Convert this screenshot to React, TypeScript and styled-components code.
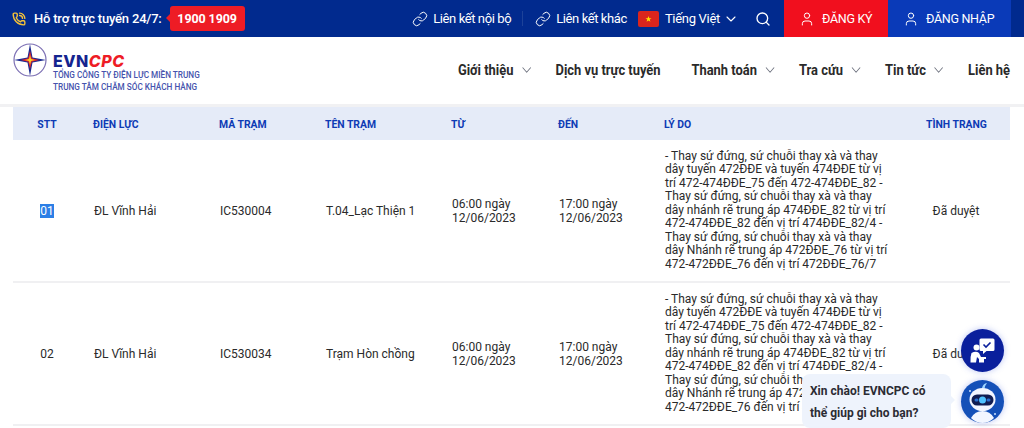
import * as React from 'react';
import styled, { createGlobalStyle } from 'styled-components';
import { ChevronDown, Link, PhoneCall, Search, User } from 'lucide-react';

const GlobalStyle = createGlobalStyle`
	html, body {
		margin: 0;
		height: 100%;
		overflow: hidden;
		background: #fff;
		font-family: Roboto, "Liberation Sans", sans-serif;
	}
`;

const Page = styled.div`
	position: relative;
	width: 1024px;
	height: 428px;
	overflow: hidden;
	color: #222;
`;

const TopBar = styled.div`
	display: flex;
	align-items: center;
	height: 37px;
	background: #012a8e;
	color: #fff;
	padding-left: 12px;
	box-sizing: border-box;
	white-space: nowrap;
`;

const Hotline = styled.div`
	display: flex;
	align-items: center;
	font-size: 13px;
	font-weight: 500;
	letter-spacing: -0.2px;
	gap: 8px;
	flex: 1;
`;

const HotNumber = styled.span`
	position: relative;
	background: #ee1c25;
	border-radius: 3px;
	font-weight: 700;
	font-size: 12.5px;
	letter-spacing: -0.1px;
	text-align: center;
	width: 75px;
	height: 25px;
	line-height: 25px;
	&::before {
		content: '';
		position: absolute;
		left: -4px;
		top: 8px;
		border-style: solid;
		border-width: 4.5px 4px 4.5px 0;
		border-color: transparent #ee1c25 transparent transparent;
	}
`;

const TopLink = styled.a`
	display: flex;
	align-items: center;
	gap: 5px;
	font-size: 13px;
	letter-spacing: -0.4px;
`;

const Divider = styled.span`
	width: 1px;
	height: 15px;
	margin: 0 12px 0 11px;
	background: #1d4299;
`;

const Lang = styled.div`
	display: flex;
	align-items: center;
	gap: 6px;
	margin-left: 11px;
	font-size: 13px;
	letter-spacing: -0.3px;
	svg:last-child {
		margin: 0 2px 0 -3px;
	}
`;

const SearchBox = styled.div`
	display: flex;
	margin: 0 13px 0 14px;
`;

const AuthButton = styled.a<{ $bg: string; $w: number }>`
	display: flex;
	flex: none;
	align-items: center;
	gap: 7px;
	padding-left: 15px;
	box-sizing: border-box;
	height: 37px;
	width: ${({ $w }) => $w}px;
	background: ${({ $bg }) => $bg};
	font-size: 12.5px;
	letter-spacing: -0.3px;
`;

const TopEnd = styled.div`
	flex: none;
	width: 13px;
`;

const NavBar = styled.div`
	display: flex;
	align-items: center;
	height: 67px;
	padding: 0 14px 0 13px;
	background: #fff;
	border-bottom: 3px solid #f1f1f3;
`;

const Brand = styled.div`
	display: flex;
	align-items: flex-start;
	align-self: flex-start;
	gap: 6px;
	margin-top: 6px;
	flex: 1;
`;

const BrandText = styled.div`
	display: flex;
	flex-direction: column;
	padding-top: 9px;
`;

const BrandName = styled.div`
	font-family: Inter, "Liberation Sans", sans-serif;
	font-size: 16px;
	font-weight: 800;
	line-height: 18px;
	letter-spacing: 0.5px;
	color: #14248f;
	em {
		color: #ee1c25;
	}
`;

const BrandLine = styled.div`
	font-size: 8.2px;
	font-weight: 500;
	line-height: 11.5px;
	color: #4553ad;
	white-space: nowrap;
	&:first-of-type {
		margin-top: 10px;
	}
`;

// the site uses a condensed face: squeeze Roboto from the right edge
const NavMenu = styled.nav`
	display: flex;
	align-items: center;
	transform: scaleX(0.86);
	transform-origin: right center;
	margin-top: -1px;
`;

const NavItem = styled.a<{ $gap?: number }>`
	display: flex;
	align-items: center;
	gap: 6px;
	margin-right: ${({ $gap }) => $gap ?? 0}px;
	font-weight: 700;
	font-size: 15px;
	color: #2a2a2a;
	white-space: nowrap;
	svg {
		color: #6b6f7c;
	}
`;

const Table = styled.div`
	margin: 0 14px 0 13px;
`;

const GRID = '80px 126px 106px 126px 107px 106px 262px 60px 1fr';

const HeadRow = styled.div`
	display: grid;
	grid-template-columns: ${GRID};
	align-items: center;
	height: 33px;
	padding-top: 1px;
	box-sizing: border-box;
	background: #e5ebf8;
	color: #0e3bb5;
	font-size: 10.4px;
	font-weight: 700;
	white-space: nowrap;
`;

const HeadCell = styled.div<{ $pr?: number }>`
	text-align: ${({ $pr }) => ($pr === undefined ? 'left' : 'center')};
	padding-right: ${({ $pr }) => $pr ?? 0}px;
`;

const Row = styled.div`
	display: grid;
	grid-template-columns: ${GRID};
	align-items: center;
	height: 143px;
	border-bottom: 2px solid #f0f0f2;
	box-sizing: border-box;
	font-size: 12px;
	color: #2a2a2a;
`;

const Cell = styled.div<{ $pr?: number }>`
	padding-left: ${({ $pr }) => ($pr === undefined ? '1px' : '0')};
	text-align: ${({ $pr }) => ($pr === undefined ? 'left' : 'center')};
	padding-right: ${({ $pr }) => $pr ?? 0}px;
	line-height: 14px;
	white-space: nowrap;
`;

const Reason = styled(Cell)`
	line-height: 13.5px;
`;

const Selected = styled.span`
	background: #2c7fe6;
	color: #fff;
`;

const BotButton = styled.div<{ $top: number; $bg: string }>`
	position: absolute;
	left: 961px;
	top: ${({ $top }) => $top}px;
	width: 43px;
	height: 43px;
	border-radius: 50%;
	background: ${({ $bg }) => $bg};
	box-shadow: 0 0 6px rgba(60, 90, 220, 0.35);
`;

const Bubble = styled.div`
	position: absolute;
	left: 802px;
	top: 374px;
	width: 149px;
	height: 54px;
	box-sizing: border-box;
	padding: 7px 8px;
	background: #eef3fc;
	border-radius: 8px;
	font-size: 12px;
	font-weight: 700;
	line-height: 21.5px;
	color: #2b2b33;
	&::after {
		content: '';
		position: absolute;
		right: -4px;
		top: 22px;
		border-style: solid;
		border-width: 4px 0 4px 4px;
		border-color: transparent transparent transparent #eef3fc;
	}
`;

const rows = [
	{ stt: '01', name: 'T.04_Lạc Thiện 1', code: 'IC530004' },
	{ stt: '02', name: 'Trạm Hòn chồng', code: 'IC530034' },
];

const reason = [
	'- Thay sứ đứng, sứ chuỗi thay xà và thay',
	'dây tuyến 472ĐĐE và tuyến 474ĐĐE từ vị',
	'trí 472-474ĐĐE_75 đến 472-474ĐĐE_82 -',
	'Thay sứ đứng, sứ chuỗi thay xà và thay',
	'dây nhánh rẽ trung áp 474ĐĐE_82 từ vị trí',
	'472-474ĐĐE_82 đến vị trí 474ĐĐE_82/4 -',
	'Thay sứ đứng, sứ chuỗi thay xà và thay',
	'dây Nhánh rẽ trung áp 472ĐĐE_76 từ vị trí',
	'472-472ĐĐE_76 đến vị trí 472ĐĐE_76/7',
];

const Logo = () => (
	<svg width="34" height="34" viewBox="0 0 34 34">
		<circle cx="17" cy="17" r="16" fill="#fff" stroke="#7d70b4" strokeWidth="1.2" />
		<path d="M17 1 L19.500 14.500 L33 17 L19.500 19.500 L17 33 L14.500 19.500 L1 17 L14.500 14.500 Z" fill="#1b2a8f" />
		<path d="M17 8 L18.800 15.200 L26 17 L18.800 18.800 L17 26 L15.200 18.800 L8 17 L15.200 15.200 Z" fill="#e3242b" />
		<path d="M17 12 L18 16 L22 17 L18 18 L17 22 L16 18 L12 17 L16 16 Z" fill="#f8d42a" />
	</svg>
);

const Flag = () => (
	<svg width="21" height="16" viewBox="0 0 21 16">
		<rect width="21" height="16" rx="2" fill="#da251d" />
		<path d="M10.500 5 L11.300 7.200 L13.500 7.200 L11.700 8.600 L12.400 10.800 L10.500 9.400 L8.600 10.800 L9.300 8.600 L7.500 7.200 L9.700 7.200 Z" fill="#ffdf00" />
	</svg>
);

const AgentIcon = () => (
	<svg width="43" height="43" viewBox="0 0 43 43">
		<circle cx="15.500" cy="18.500" r="3" fill="#fff" />
		<path d="M10.500 24 Q15 21.500 18 24 L20 28 L25 28 L25 30 L23 30 L23 33.500 L18 33.500 L18 30 L16 28 L15 33.500 L9.500 33.500 Q9 28 10.500 24 Z" fill="#fff" />
		<path d="M20 9.500 H32 A1.500 1.500 0 0 1 33.500 11 V20.500 A1.500 1.500 0 0 1 32 22 H25.500 L22 25 V22 H20 A1.500 1.500 0 0 1 18.500 20.500 V11 A1.500 1.500 0 0 1 20 9.500 Z" fill="#fff" />
		<path d="M22.500 15.500 L25 18 L29.500 13.500" fill="none" stroke="#0a1f9c" strokeWidth="1.600" />
	</svg>
);

const RobotIcon = () => (
	<svg width="43" height="43" viewBox="0 0 43 43">
		<path d="M21 8 Q22 3.500 26 3 Q23.500 6 23.500 9 Z" fill="#9fd6ff" />
		<circle cx="9" cy="11" r="1" fill="#cfe4ff" />
		<circle cx="34" cy="34" r="1" fill="#cfe4ff" />
		<path d="M10 38 Q14 31 21.500 31 Q29 31 33 38 Q28 43 21.500 43 Q15 43 10 38 Z" fill="#f2f6ff" />
		<ellipse cx="21.500" cy="19.500" rx="13" ry="11.500" fill="#f2f6ff" />
		<rect x="10.500" y="14.500" width="22" height="11" rx="5.500" fill="#101d52" />
		<circle cx="21.500" cy="20" r="3.500" fill="#4fc3ff" />
		<rect x="13.500" y="18.500" width="4" height="3" rx="1.500" fill="#2a6fd0" />
		<rect x="25.500" y="18.500" width="4" height="3" rx="1.500" fill="#2a6fd0" />
	</svg>
);

export default function App() {
	return (
		<Page>
			<GlobalStyle />
			<TopBar>
				<Hotline>
					<PhoneCall size={14} color="#f3c13a" strokeWidth={2.4} />
					<span>Hỗ trợ trực tuyến 24/7:</span>
					<HotNumber>1900 1909</HotNumber>
				</Hotline>
				<TopLink>
					<Link size={16} strokeWidth={1.5} />
					Liên kết nội bộ
				</TopLink>
				<Divider />
				<TopLink>
					<Link size={16} strokeWidth={1.5} />
					Liên kết khác
				</TopLink>
				<Lang>
					<Flag />
					Tiếng Việt
					<ChevronDown size={16} strokeWidth={1.6} />
				</Lang>
				<SearchBox>
					<Search size={16} strokeWidth={2} />
				</SearchBox>
				<AuthButton $bg="#f10f1e" $w={104}>
					<User size={16} strokeWidth={1.5} />
					ĐĂNG KÝ
				</AuthButton>
				<AuthButton $bg="#0a3ab8" $w={123}>
					<User size={16} strokeWidth={1.5} />
					ĐĂNG NHẬP
				</AuthButton>
				<TopEnd />
			</TopBar>
			<NavBar>
				<Brand>
					<Logo />
					<BrandText>
						<BrandName>
							EVN<em>CPC</em>
						</BrandName>
						<BrandLine>TỔNG CÔNG TY ĐIỆN LỰC MIỀN TRUNG</BrandLine>
						<BrandLine>TRUNG TÂM CHĂM SÓC KHÁCH HÀNG</BrandLine>
					</BrandText>
				</Brand>
				<NavMenu>
					<NavItem $gap={25}>
						Giới thiệu <ChevronDown size={18} strokeWidth={1.4} />
					</NavItem>
					<NavItem $gap={36}>Dịch vụ trực tuyến</NavItem>
					<NavItem $gap={25}>
						Thanh toán <ChevronDown size={18} strokeWidth={1.4} />
					</NavItem>
					<NavItem $gap={25}>
						Tra cứu <ChevronDown size={18} strokeWidth={1.4} />
					</NavItem>
					<NavItem $gap={25}>
						Tin tức <ChevronDown size={18} strokeWidth={1.4} />
					</NavItem>
					<NavItem>Liên hệ</NavItem>
				</NavMenu>
			</NavBar>
			<Table>
				<HeadRow>
					<HeadCell $pr={12}>STT</HeadCell>
					<HeadCell>ĐIỆN LỰC</HeadCell>
					<HeadCell>MÃ TRẠM</HeadCell>
					<HeadCell>TÊN TRẠM</HeadCell>
					<HeadCell>TỪ</HeadCell>
					<HeadCell>ĐẾN</HeadCell>
					<HeadCell>LÝ DO</HeadCell>
					<HeadCell $pr={0}>TÌNH TRẠNG</HeadCell>
				</HeadRow>
				{rows.map((r, i) => (
					<Row key={r.stt}>
						<Cell $pr={12}>{i === 0 ? <Selected>{r.stt}</Selected> : r.stt}</Cell>
						<Cell>ĐL Vĩnh Hải</Cell>
						<Cell>{r.code}</Cell>
						<Cell>{r.name}</Cell>
						<Cell>
							06:00 ngày
							<br />
							12/06/2023
						</Cell>
						<Cell>
							17:00 ngày
							<br />
							12/06/2023
						</Cell>
						<Reason>
							{reason.map((l) => (
								<div key={l}>{l}</div>
							))}
						</Reason>
						<Cell $pr={0}>Đã duyệt</Cell>
					</Row>
				))}
			</Table>
			<BotButton $top={329} $bg="#0a1f9c">
				<AgentIcon />
			</BotButton>
			<BotButton $top={380} $bg="#1450b8">
				<RobotIcon />
			</BotButton>
			<Bubble>
				Xin chào! EVNCPC có
				<br />
				thể giúp gì cho bạn?
			</Bubble>
		</Page>
	);
}
